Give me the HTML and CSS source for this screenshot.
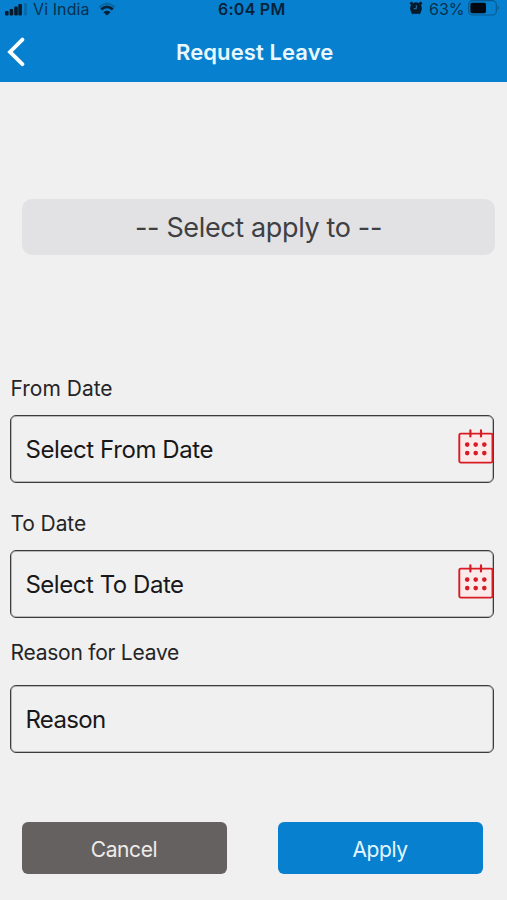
FILE: index.html
```html
<!DOCTYPE html>
<html lang="en">
<head>
<meta charset="utf-8">
<title>Request Leave</title>
<link rel="stylesheet" href="styles.css">
</head>
<body>
<header class="header">
  <div class="status">
    <div class="status-left">
      <svg class="signal" width="22" height="14" viewBox="0 0 22 14"><rect x="0" y="9" width="3.6" height="4.5" rx="1"/><rect x="4.6" y="7" width="3.6" height="6.5" rx="1"/><rect x="9.2" y="4.5" width="3.6" height="9" rx="1"/><rect x="13.3" y="2" width="3.6" height="11.5" rx="1"/><rect x="19" y="1" width="3" height="12.5" rx="1" opacity=".22"/></svg>
      <span class="carrier">Vi India</span>
      <svg class="wifi" width="18" height="14" viewBox="0 0 18 14" fill="none" stroke="#062138"><path d="M1.2 5.2Q9-2 16.8 5.2" stroke-width="1.6" opacity=".3"/><path d="M3.2 7.4Q9 2.4 14.8 7.4" stroke-width="2.8"/><path d="M9 13.6 5.4 10.3Q9 7.4 12.6 10.3Z" fill="#062138" stroke="none"/></svg>
    </div>
    <span class="time">6:04 PM</span>
    <div class="status-right">
      <svg class="alarm" width="14" height="14" viewBox="0 0 14 14"><path d="M1.4 3.2 3.4 1.4M12.6 3.2 10.6 1.4M3 12.6l1.4-1.6M11 12.6l-1.4-1.6" stroke="#061a2c" stroke-width="2.6"/><circle cx="7" cy="7.2" r="5.9" fill="#061a2c"/><path d="M7.3 4.2v3.5H4.7" fill="none" stroke="#2b79ac" stroke-width="1"/></svg>
      <span class="percent">63%</span>
      <svg class="battery" width="32" height="16" viewBox="0 0 32 16"><rect x=".7" y=".7" width="27.6" height="14.3" rx="3.8" fill="none" stroke="#075a92" stroke-width="1.2"/><rect x="2.4" y="2.8" width="15.6" height="10.5" rx="1.8" fill="#020810"/><path d="M29.6 5.4q3 2.4 0 4.8Z" fill="#075a92"/></svg>
    </div>
  </div>
  <div class="nav">
    <svg class="back" width="20" height="30" viewBox="0 0 20 30"><path d="M15.4 2.6 3 14.9 15.4 27.2" fill="none" stroke="#fff" stroke-width="3.8" stroke-linecap="round"/></svg>
    <h1 class="title">Request Leave</h1>
  </div>
</header>
<main class="form">
  <div class="picker"><span class="picker-text">-- Select apply to --</span></div>
  <div class="label label-from">From Date</div>
  <div class="field"><span class="from-text">Select From Date</span>
    <svg class="calendar" width="36" height="36" viewBox="0 0 36 36"><rect x="1.3" y="4.6" width="33.2" height="29" rx="1.5" fill="#fbeaea" stroke="#d81c24" stroke-width="1.9"/><path d="M12.4 1.4v6M23 1.4v6" stroke="#d81c24" stroke-width="2.2" stroke-linecap="round"/><g fill="#d81c24"><circle cx="9.2" cy="15.6" r="2.3"/><circle cx="17.7" cy="15.6" r="2.3"/><circle cx="26.3" cy="15.6" r="2.3"/><circle cx="9.2" cy="24.1" r="2.3"/><circle cx="17.7" cy="24.1" r="2.3"/><circle cx="26.3" cy="24.1" r="2.3"/></g></svg>
  </div>
  <div class="label label-to">To Date</div>
  <div class="field"><span class="to-text">Select To Date</span>
    <svg class="calendar" width="36" height="36" viewBox="0 0 36 36"><rect x="1.3" y="4.6" width="33.2" height="29" rx="1.5" fill="#fbeaea" stroke="#d81c24" stroke-width="1.9"/><path d="M12.4 1.4v6M23 1.4v6" stroke="#d81c24" stroke-width="2.2" stroke-linecap="round"/><g fill="#d81c24"><circle cx="9.2" cy="15.6" r="2.3"/><circle cx="17.7" cy="15.6" r="2.3"/><circle cx="26.3" cy="15.6" r="2.3"/><circle cx="9.2" cy="24.1" r="2.3"/><circle cx="17.7" cy="24.1" r="2.3"/><circle cx="26.3" cy="24.1" r="2.3"/></g></svg>
  </div>
  <div class="label label-reason">Reason for Leave</div>
  <div class="field"><span class="reason-text">Reason</span></div>
  <div class="actions">
    <button class="button cancel">Cancel</button>
    <button class="button apply">Apply</button>
  </div>
</main>
</body>
</html>
```
FILE: styles.css
```css
* { box-sizing: border-box; }
body {
  margin: 0;
  height: 900px;
  overflow: hidden;
  background: #f0f0f0;
  color: #18181a;
  font-family: Inter, "Liberation Sans", sans-serif;
}
svg { display: block; flex: none; }
.header { height: 82px; background: #0781cf; }
.status {
  display: grid;
  grid-template-columns: 218px 1fr auto;
  height: 20px;
  color: #06304f;
  font-size: 16px;
  line-height: 18px;
}
.status-left, .status-right { display: flex; align-items: flex-start; }
.signal { margin: 2px 6px 0 5px; fill: #061a2c; }
.carrier { width: 57px; letter-spacing: 0.1px; white-space: nowrap; }
.wifi { margin: 2px 0 0 8px; }
.time { color: #06223b; font-weight: 600; letter-spacing: 0.25px; white-space: nowrap; }
.alarm { margin: 1px 6px 0 0; }
.percent { width: 35px; margin-right: 4px; white-space: nowrap; }
.battery { margin-right: 7px; }
.nav { display: flex; align-items: center; height: 62px; padding-left: 7px; }
.back { margin-top: 2px; }
.title {
  margin: 2px 0 0 149px;
  color: #e9f8ff;
  font-size: 22px;
  font-weight: 600;
  letter-spacing: 0.1px;
  line-height: 28px;
  white-space: nowrap;
}
.form { display: flex; flex-direction: column; padding: 117px 13px 0 10px; }
.picker {
  display: flex;
  align-items: center;
  justify-content: center;
  height: 56px;
  margin: 0 -1px 0 12px;
  padding-top: 1px;
  border-radius: 10px;
  background: #e2e2e4;
  color: #404043;
  font-size: 27px;
  font-feature-settings: "calt" 0;
  letter-spacing: -0.36px;
}
.label { height: 24px; padding-left: 0.5px; color: #252527; font-size: 21px; line-height: 24px; }
.label-from { margin: 122px 0 14px; letter-spacing: 0; }
.label-to { margin: 29px 0 14px; letter-spacing: -0.1px; }
.label-reason { margin: 23px 0 20px; letter-spacing: -0.24px; }
.field {
  display: flex;
  align-items: center;
  justify-content: space-between;
  height: 68px;
  padding-left: 14.4px;
  border: 1px solid #3c3c3e;
  border-radius: 6px;
  box-shadow: inset 0 0 0 1px #b8b8ba;
  font-size: 24px;
  letter-spacing: -0.4px;
}
.to-text { letter-spacing: -0.46px; }
.reason-text { letter-spacing: -0.65px; }
.calendar { margin: -4px -1px 0 0; }
.actions { display: flex; justify-content: space-between; margin: 69px 12px 0 12px; }
.button {
  width: 205px;
  height: 52px;
  padding: 2px 1px 0 0;
  border: 0;
  border-radius: 6px;
  font-family: inherit;
  font-size: 21px;
  letter-spacing: -0.4px;
}
.actions { margin-right: 11px; }
.cancel { background: #656160; color: #efebea; }
.apply { background: #0781cf; color: #e4f7ff; }
```
